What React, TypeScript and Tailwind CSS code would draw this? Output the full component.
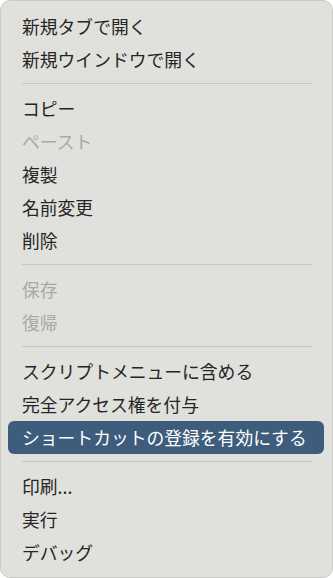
type Item = { label: string; disabled?: boolean; active?: boolean } | "sep";

const items: Item[] = [
  { label: "新規タブで開く" },
  { label: "新規ウインドウで開く" },
  "sep",
  { label: "コピー" },
  { label: "ペースト", disabled: true },
  { label: "複製" },
  { label: "名前変更" },
  { label: "削除" },
  "sep",
  { label: "保存", disabled: true },
  { label: "復帰", disabled: true },
  "sep",
  { label: "スクリプトメニューに含める" },
  { label: "完全アクセス権を付与" },
  { label: "ショートカットの登録を有効にする", active: true },
  "sep",
  { label: "印刷..." },
  { label: "実行" },
  { label: "デバッグ" },
];

export default function App() {
  return (
    <div className="w-[333px] h-[578px] bg-white">
      <div
        className="h-full rounded-[10px] border border-[#cacac6] bg-[#e0e0dc] pl-[7px] pr-[8px] pt-[9px] pb-[8px]"
        style={{ fontFamily: '"Noto Sans CJK JP", "Noto Sans", sans-serif' }}
      >
        {items.map((item, i) =>
          item === "sep" ? (
            <div key={i} className="pt-[7px] pb-[8px] pl-[14px] pr-[12px]">
              <div className="h-px bg-[#c6c6c3]" />
            </div>
          ) : (
            <div
              key={i}
              className={`flex h-[33px] items-center whitespace-nowrap rounded-[6px] px-[14px] text-[17.8px] leading-none ${
                item.active
                  ? "bg-[#3e5d7c] text-white"
                  : item.disabled
                  ? "text-[#a9a9a7]"
                  : "text-[#252525]"
              }`}
            >
              {item.label}
            </div>
          )
        )}
      </div>
    </div>
  );
}
